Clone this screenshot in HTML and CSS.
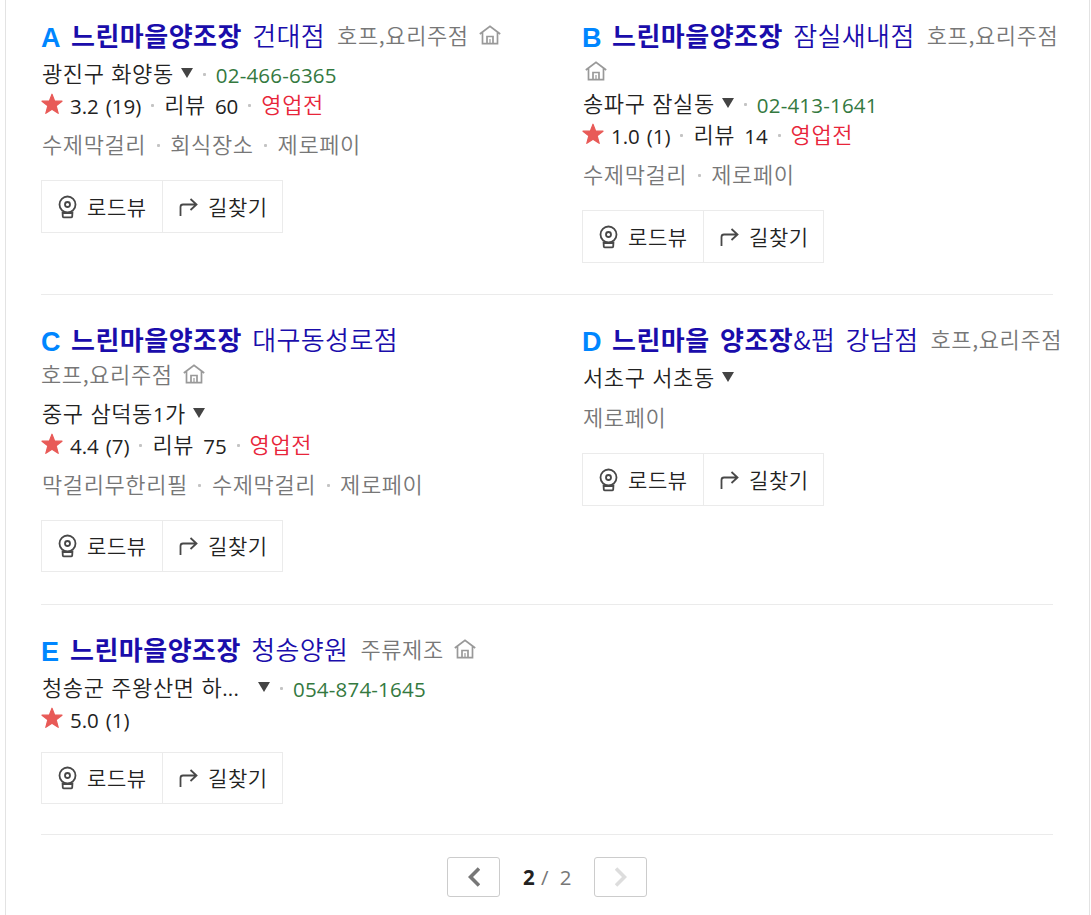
FILE: index.html
```html
<!DOCTYPE html>
<html lang="ko">
<head>
  <meta charset="UTF-8">
  <title>느린마을양조장</title>
  <link rel="stylesheet" href="styles.css">
</head>
<body>

<svg class="sprite" width="0" height="0">
  <symbol id="home" viewBox="0 0 22 20">
    <path d="M0.800 9L11 1.200L21.200 9M3.500 7.500V18.700H18.500V7.500M8 18.500V11.500H14V18.500" fill="none" stroke="#999" stroke-width="1.700"/>
    <path d="M11 14V18" stroke="#999" stroke-width="1.200"/>
  </symbol>
  <symbol id="star" viewBox="0 0 22 22">
    <path d="M11 1.200L13.600 8L21 8.200L15.200 12.800L17.200 20.300L11 16.200L4.800 20.300L6.800 12.800L1 8.200L8.400 8Z" fill="#e85a57" stroke="#e85a57" stroke-width="1.2" stroke-linejoin="round"/>
  </symbol>
  <symbol id="road" viewBox="0 0 20 24">
    <g fill="none" stroke="#484848" stroke-width="1.8">
      <circle cx="9.500" cy="9.500" r="8"/>
      <circle cx="9.500" cy="9.500" r="2.500"/>
      <path d="M4.500 16.500L4.800 21.500Q5 22.400 6 22.400H13Q14 22.400 14.200 21.500L14.500 16.500M4.500 18H14.500" stroke-linejoin="round"/>
    </g>
  </symbol>
  <symbol id="way" viewBox="0 0 20 20">
    <path d="M1.500 19V10Q1.500 7.500 4 7.500H17.500M11.500 2L17.500 7.500L11.500 13" fill="none" stroke="#484848" stroke-width="1.8"/>
  </symbol>
</svg>

<div class="panel">
  <div class="row">
    <div class="place">
      <div class="title"><span class="mark">A</span><a class="name"><b>느린마을양조장</b> 건대점</a><span class="cate">호프,요리주점</span><svg class="home"><use href="#home"/></svg></div>
      <div class="addr"><span>광진구 화양동</span><i class="arrow"></i><i class="dot"></i><span class="tel">02-466-6365</span></div>
      <div class="rate"><svg class="star"><use href="#star"/></svg><span class="num">3.2 (19)</span><i class="dot"></i><span>리뷰</span><span class="num cnt">60</span><i class="dot"></i><span class="state">영업전</span></div>
      <div class="tags"><span>수제막걸리</span><i class="dot"></i><span>회식장소</span><i class="dot"></i><span>제로페이</span></div>
      <div class="btns"><a class="btn"><svg class="road"><use href="#road"/></svg><span>로드뷰</span></a><a class="btn"><svg class="way"><use href="#way"/></svg><span>길찾기</span></a></div>
    </div>
    <div class="place">
      <div class="title"><span class="mark">B</span><a class="name"><b>느린마을양조장</b> 잠실새내점</a><span class="cate">호프,요리주점</span></div>
      <div class="sub only"><svg class="home"><use href="#home"/></svg></div>
      <div class="addr"><span>송파구 잠실동</span><i class="arrow"></i><i class="dot"></i><span class="tel">02-413-1641</span></div>
      <div class="rate"><svg class="star"><use href="#star"/></svg><span class="num">1.0 (1)</span><i class="dot"></i><span>리뷰</span><span class="num cnt">14</span><i class="dot"></i><span class="state">영업전</span></div>
      <div class="tags"><span>수제막걸리</span><i class="dot"></i><span>제로페이</span></div>
      <div class="btns"><a class="btn"><svg class="road"><use href="#road"/></svg><span>로드뷰</span></a><a class="btn"><svg class="way"><use href="#way"/></svg><span>길찾기</span></a></div>
    </div>
  </div>

  <div class="row">
    <div class="place">
      <div class="title"><span class="mark">C</span><a class="name"><b>느린마을양조장</b> 대구동성로점</a></div>
      <div class="sub"><span class="cate">호프,요리주점</span><svg class="home"><use href="#home"/></svg></div>
      <div class="addr"><span>중구 삼덕동<span class="num">1</span>가</span><i class="arrow"></i></div>
      <div class="rate"><svg class="star"><use href="#star"/></svg><span class="num">4.4 (7)</span><i class="dot"></i><span>리뷰</span><span class="num cnt">75</span><i class="dot"></i><span class="state">영업전</span></div>
      <div class="tags"><span>막걸리무한리필</span><i class="dot"></i><span>수제막걸리</span><i class="dot"></i><span>제로페이</span></div>
      <div class="btns short"><a class="btn"><svg class="road"><use href="#road"/></svg><span>로드뷰</span></a><a class="btn"><svg class="way"><use href="#way"/></svg><span>길찾기</span></a></div>
    </div>
    <div class="place">
      <div class="title"><span class="mark">D</span><a class="name"><b>느린마을 양조장</b>&amp;펍 강남점</a><span class="cate">호프,요리주점</span></div>
      <div class="addr"><span>서초구 서초동</span><i class="arrow"></i></div>
      <div class="tags"><span>제로페이</span></div>
      <div class="btns"><a class="btn"><svg class="road"><use href="#road"/></svg><span>로드뷰</span></a><a class="btn"><svg class="way"><use href="#way"/></svg><span>길찾기</span></a></div>
    </div>
  </div>

  <div class="row">
    <div class="place">
      <div class="title"><span class="mark narrow">E</span><a class="name"><b>느린마을양조장</b> 청송양원</a><span class="cate">주류제조</span><svg class="home"><use href="#home"/></svg></div>
      <div class="addr"><span class="cut">청송군 주왕산면 하<span class="num">...</span></span><i class="arrow"></i><i class="dot"></i><span class="tel">054-874-1645</span></div>
      <div class="rate"><svg class="star"><use href="#star"/></svg><span class="num">5.0 (1)</span></div>
      <div class="btns short"><a class="btn"><svg class="road"><use href="#road"/></svg><span>로드뷰</span></a><a class="btn"><svg class="way"><use href="#way"/></svg><span>길찾기</span></a></div>
    </div>
  </div>

  <div class="paging">
    <a class="page-btn"><svg width="12" height="20" viewBox="0 0 12 20"><path d="M11 1.500L2.500 10L11 18.500" fill="none" stroke="#777" stroke-width="3.600"/></svg></a>
    <span class="page"><b>2</b><span>/</span><span class="total">2</span></span>
    <a class="page-btn"><svg width="12" height="20" viewBox="0 0 12 20"><path d="M1 1.500L9.500 10L1 18.500" fill="none" stroke="#ddd" stroke-width="3.600"/></svg></a>
  </div>
</div>

</body>
</html>
```
FILE: styles.css
```css
body {
  margin: 0;
  background: #fff;
  color: #222;
  font-family: "Noto Sans CJK KR", sans-serif;
  font-size: 22px;
  font-weight: 350;
  letter-spacing: 0.6px;
}

.sprite {
  display: block;
}

.panel {
  width: 1012px;
  height: 915px;
  margin-left: 5px;
  padding: 0 36px 0 35px;
  border-left: 1px solid #e3e3e3;
  border-right: 1px solid #e3e3e3;
  overflow: hidden;
}

.row {
  display: flex;
  height: 274px;
  padding-top: 20px;
  border-bottom: 1px solid #ebebeb;
}

.row + .row {
  height: 280px;
  padding-top: 29px;
}

.row + .row + .row {
  height: 200px;
}

.place {
  flex: 0 0 541px;
}

.title,
.sub,
.addr,
.rate,
.tags {
  display: flex;
  align-items: center;
  white-space: nowrap;
}

.title {
  height: 34px;
}

.sub {
  height: 35px;
}

.sub.only {
  height: 29px;
}

.addr,
.rate {
  height: 31px;
}

.addr {
  margin-top: 5px;
}

.sub + .addr {
  margin-top: 6px;
}

.addr > span,
.rate > span,
.tags > span {
  padding-bottom: 5px;
}

.addr,
.tags {
  padding-left: 1px;
}

.mark {
  width: 30px;
  padding-top: 3px;
  color: #0086ff;
  font-family: "Liberation Sans", sans-serif;
  font-size: 27px;
  font-weight: bold;
  letter-spacing: 0;
}

.mark.narrow {
  width: 29px;
}

.name {
  padding-bottom: 6px;
  color: #1a0dab;
  font-size: 26px;
  letter-spacing: 0.4px;
  word-spacing: 2.5px;
}

.name b {
  font-weight: bold;
  letter-spacing: 0.5px;
}

.cate {
  padding-bottom: 6px;
  color: #777;
}

.title .cate {
  margin-left: 12px;
}

.home {
  width: 22px;
  height: 20px;
  margin-left: 10px;
  margin-bottom: 4px;
}

.sub.only .home {
  margin-left: 3px;
  margin-bottom: 0;
  margin-top: 4px;
}

.arrow {
  border: 6px solid transparent;
  border-top: 10px solid #444;
  border-bottom: 0;
  margin-left: 7px;
  margin-bottom: 4px;
}

.dot {
  width: 3px;
  height: 3px;
  margin: 0 10px;
  background: #c4c4c4;
  border-radius: 1px;
}

.tags .dot {
  margin: 0 10.500px;
}

.num,
.tel,
.page {
  font-family: "Open Sans", sans-serif;
  font-size: 20.500px;
  font-weight: 400;
  letter-spacing: 0.2px;
}

/* digits sit a little lower than the hangul */
.addr > .tel,
.rate > .num {
  padding-bottom: 0;
}

.rate .num {
  letter-spacing: 0;
  word-spacing: 1.5px;
}

.tel {
  color: #34793f;
}

.cut {
  width: 209px;
}

.star {
  width: 22px;
  height: 22px;
  margin-right: 7px;
  margin-bottom: 4px;
}

.cnt {
  margin-left: 9px;
}

.state {
  color: #e8253a;
}

.tags {
  height: 32px;
  margin-top: 8px;
  color: #777;
}

.btns {
  display: inline-flex;
  margin-top: 19px;
  border: 1px solid #ebebeb;
}

.rate + .btns {
  margin-top: 17px;
}

.btn {
  display: flex;
  align-items: center;
  width: 104px;
  height: 51px;
  padding-left: 16px;
  font-size: 21px;
}

.btn span {
  padding-bottom: 2px;
}

.short .btn {
  height: 50px;
}

.btn + .btn {
  width: 103px;
  border-left: 1px solid #ebebeb;
}

.road {
  width: 20px;
  height: 24px;
  margin-right: 9px;
}

.way {
  width: 20px;
  height: 20px;
  margin-right: 9px;
}

.paging {
  display: flex;
  justify-content: center;
  padding-top: 22px;
}

.page-btn {
  display: flex;
  align-items: center;
  justify-content: center;
  width: 51px;
  height: 38px;
  border: 1px solid #ccc;
  border-radius: 3px;
}

.page {
  display: flex;
  align-items: center;
  width: 71px;
  padding-left: 23px;
  color: #777;
}

.page b {
  color: #222;
  margin-right: 6px;
}

.total {
  margin-left: 11px;
}
```
